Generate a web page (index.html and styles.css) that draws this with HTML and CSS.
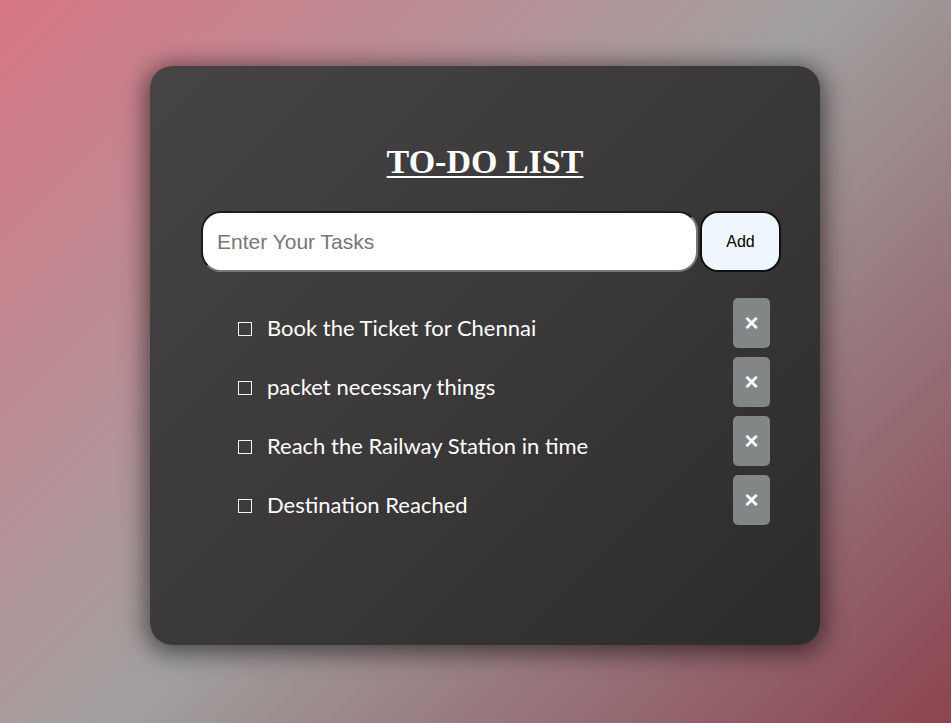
FILE: index.html
```html
<!DOCTYPE html>
<html>
<head>
<meta charset="utf-8">
<link rel="stylesheet" href="styles.css">
</head>
<body>
<div class="page">
  <div class="card">
    <h1 class="title">TO-DO LIST</h1>
    <div class="form">
      <input class="task-input" type="text" placeholder="Enter Your Tasks">
      <button class="add-btn">Add</button>
    </div>
    <ul class="list">
      <li class="task"><span class="box"></span><span class="task-text">Book the Ticket for Chennai</span><button class="del">×</button></li>
      <li class="task"><span class="box"></span><span class="task-text">packet necessary things</span><button class="del">×</button></li>
      <li class="task"><span class="box"></span><span class="task-text">Reach the Railway Station in time</span><button class="del">×</button></li>
      <li class="task"><span class="box"></span><span class="task-text">Destination Reached</span><button class="del">×</button></li>
    </ul>
  </div>
</div>
</body>
</html>
```
FILE: styles.css
```css
html, body {
  margin: 0;
  padding: 0;
  height: 100%;
}
body {
  background: linear-gradient(135deg, #d87686 0%, #a1a09f 50%, #8c4450 100%);
  font-family: "Liberation Sans", Arial, sans-serif;
  overflow: hidden;
}
.page {
  padding: 66px 0 0 150px;
}
.card {
  width: 670px;
  height: 579px;
  box-sizing: border-box;
  border-radius: 22px;
  background: linear-gradient(135deg, #464445 0%, #3a3839 50%, #2d2c2c 100%);
  box-shadow: 0 4px 24px 4px rgba(0, 0, 0, 0.55);
  padding-top: 77px;
}
.title {
  margin: 0;
  text-align: center;
  font-family: "Liberation Serif", "Times New Roman", serif;
  font-weight: bold;
  font-size: 34px;
  line-height: 38px;
  color: #fff;
  text-decoration: underline;
  text-decoration-thickness: 2px;
  text-underline-offset: 3px;
}
.form {
  display: flex;
  gap: 2px;
  margin: 30px 0 0 51px;
}
.task-input {
  width: 497px;
  height: 61px;
  box-sizing: border-box;
  border-radius: 20px;
  border: 2px solid #1d1d1d;
  border-bottom-color: #777;
  border-right-color: #777;
  background: #fff;
  padding: 0 14px;
  font-family: "Liberation Sans", Arial, sans-serif;
  font-size: 21px;
  color: #222;
  outline: none;
}
.task-input::placeholder {
  color: #767676;
}
.add-btn {
  width: 81px;
  height: 61px;
  box-sizing: border-box;
  border-radius: 18px;
  border: 2px solid #111;
  background: #eff6fd;
  font-family: "Liberation Sans", Arial, sans-serif;
  font-size: 16px;
  color: #000;
  padding: 0;
}
.list {
  list-style: none;
  margin: 26px 50px 0 88px;
  padding: 0;
}
.task {
  display: flex;
  align-items: flex-start;
  height: 50px;
  margin-bottom: 9px;
}
.task:last-child {
  margin-top: 1px;
}
.box {
  width: 14px;
  height: 14px;
  box-sizing: border-box;
  border: 1.5px solid #f4f4f4;
  margin-top: 24px;
  flex: none;
}
.task-text {
  margin: 16px 0 0 15px;
  font-family: Lato, "Open Sans", sans-serif;
  font-size: 22px;
  line-height: 27px;
  color: #fff;
  flex: 1;
}
.del {
  width: 37px;
  height: 50px;
  border: none;
  border-radius: 5px;
  background: #828686;
  color: #fff;
  font-family: "Liberation Sans", Arial, sans-serif;
  font-weight: bold;
  font-size: 24px;
  line-height: 1;
  padding: 0;
  flex: none;
}
```
